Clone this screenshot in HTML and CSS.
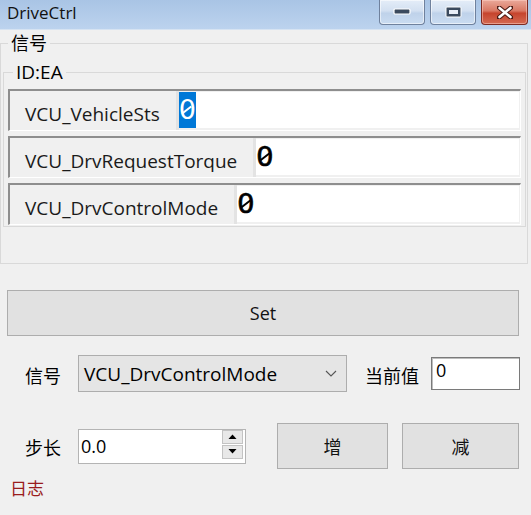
FILE: index.html
```html
<!DOCTYPE html>
<html>
<head>
<meta charset="utf-8">
<link rel="stylesheet" href="styles.css">
</head>
<body>
<div class="window">
  <div class="titlebar">
    <span class="title">DriveCtrl</span>
    <div class="caption-buttons">
      <div class="cap-btn">
        <svg width="18" height="8" viewBox="0 0 18 8"><rect x="1" y="1" width="16" height="5" rx="1" fill="#3b4a5e" stroke="#fff" stroke-width="1.2"/></svg>
      </div>
      <div class="cap-btn">
        <svg width="17" height="12" viewBox="0 0 17 12"><rect x="1" y="1" width="15" height="10" rx="1" fill="#3b4a5e" stroke="#fff" stroke-width="1"/><rect x="4" y="4" width="9" height="4" fill="#e8eef7"/></svg>
      </div>
      <div class="cap-btn close">
        <svg width="16" height="13" viewBox="0 0 16 13"><path d="M2 1.5 L14 11.5 M14 1.5 L2 11.5" stroke="#4a1a14" stroke-width="4.6" stroke-linecap="round"/><path d="M2.5 2 L13.5 11 M13.5 2 L2.5 11" stroke="#fff" stroke-width="2.6" stroke-linecap="round"/></svg>
      </div>
    </div>
  </div>
  <div class="client">
    <fieldset class="group outer">
      <legend class="group-title">信号</legend>
      <fieldset class="group inner">
        <legend class="group-title">ID:EA</legend>
        <div class="sig-row">
          <div class="sig-name">VCU_VehicleSts</div>
          <div class="sig-value"><span class="sel"><span class="zero">0</span></span></div>
        </div>
        <div class="sig-row">
          <div class="sig-name">VCU_DrvRequestTorque</div>
          <div class="sig-value"><span class="zero">0</span></div>
        </div>
        <div class="sig-row">
          <div class="sig-name">VCU_DrvControlMode</div>
          <div class="sig-value"><span class="zero">0</span></div>
        </div>
      </fieldset>
    </fieldset>

    <div class="btn set-btn">Set</div>

    <div class="ctrl-row signal-row">
      <span class="ctrl-label">信号</span>
      <div class="combo">
        <span class="combo-text">VCU_DrvControlMode</span>
        <svg class="chevron" width="12" height="7" viewBox="0 0 12 7"><path d="M1 1 L6 6 L11 1" fill="none" stroke="#555" stroke-width="1.1"/></svg>
      </div>
      <span class="cur-label">当前值</span>
      <div class="cur-value">0</div>
    </div>

    <div class="ctrl-row step-row">
      <span class="ctrl-label">步长</span>
      <div class="spin">
        <span class="spin-text">0.0</span>
        <div class="spin-btns">
          <div class="spin-btn"><svg width="9" height="5" viewBox="0 0 9 5"><path d="M0.5 5 L4.5 0.5 L8.5 5 Z" fill="#000"/></svg></div>
          <div class="spin-btn"><svg width="9" height="5" viewBox="0 0 9 5"><path d="M0.5 0 L4.5 4.5 L8.5 0 Z" fill="#000"/></svg></div>
        </div>
      </div>
      <div class="btn inc-btn">增</div>
      <div class="btn dec-btn">减</div>
    </div>

    <div class="log-label">日志</div>
  </div>
</div>
</body>
</html>
```

FILE: styles.css
```css
* { box-sizing: border-box; }

body {
  margin: 0;
  background: #f0f0f0;
  font-family: "Open Sans", "Noto Sans CJK SC", sans-serif;
  color: #000;
}

.window {
  width: 531px;
  height: 515px;
  overflow: hidden;
  background: #f0f0f0;
}

.titlebar {
  height: 30px;
  background: linear-gradient(#a9c4e5, #bcd3ee);
  border-bottom: 1px solid #d6e3f2;
  display: flex;
  justify-content: space-between;
  align-items: flex-start;
}

.title {
  font-size: 17px;
  line-height: 26px;
  padding-left: 7px;
  color: #111;
}

.caption-buttons {
  display: flex;
  gap: 5px;
  padding-right: 3px;
}

.cap-btn {
  width: 46px;
  height: 25px;
  border: 1px solid #6f819d;
  border-top: none;
  border-radius: 0 0 4px 4px;
  background: linear-gradient(#e4edf8, #d3e0f1 45%, #bfd2ea 55%, #cadcf1);
  display: flex;
  align-items: center;
  justify-content: center;
  box-shadow: inset 0 0 0 1px rgba(255,255,255,0.55);
}

.cap-btn.close {
  width: 47px;
  border-color: #7e2b22;
  background: linear-gradient(#eaa99a, #d97864 45%, #c6442d 55%, #d46a52);
  box-shadow: inset 0 0 0 1px rgba(255,210,200,0.5);
}

.client {
  padding: 0;
}

fieldset.group {
  margin: 0;
  border: 1px solid #d9d9d9;
  min-width: 0;
}

.group-title {
  font-size: 18px;
  line-height: 26px;
  padding: 0 3px;
  margin-left: 5px;
}

.inner .group-title {
  font-size: 19px;
}

.outer {
  margin-left: 2px;
  width: 528px;
  padding: 3px 2px 36px 2px;
}

.inner {
  width: 523px;
  padding: 4px 4px 1px 4px;
}

.sig-row {
  display: flex;
  height: 42px;
  border-top: 2px solid #8e8e8e;
  border-left: 2px solid #8e8e8e;
  border-right: 1px solid #ffffff;
  border-bottom: 1px solid #ffffff;
  margin-bottom: 5px;
}

.sig-row:last-child {
  margin-bottom: 0;
}

.sig-name {
  font-size: 19px;
  line-height: 24px;
  padding: 0 16px 4px 15px;
  display: flex;
  align-items: flex-end;
  border-right: 3px solid #e3e3e3;
  color: #1a1a1a;
}

.sig-value {
  flex: 1;
  background: #fff;
  margin: 1px 1px 2px 0;
  font-family: "DejaVu Sans", sans-serif;
  font-weight: normal;
  -webkit-text-stroke: 0.7px currentColor;
  font-size: 27px;
  line-height: 36px;
  height: 36px;
}

.zero {
  position: relative;
  display: inline-block;
}

.zero::after {
  content: "";
  position: absolute;
  left: 50%;
  top: 51%;
  width: 11px;
  height: 2.4px;
  background: currentColor;
  transform: translate(-50%, -50%) rotate(-38deg);
}

.sel {
  display: inline-block;
  background: #0078d7;
  color: #fff;
  -webkit-text-stroke: 0;
}

.btn {
  background: #e1e1e1;
  border: 1px solid #adadad;
  display: flex;
  align-items: center;
  justify-content: center;
  font-size: 18px;
  color: #111;
}

.set-btn {
  margin: 26px 0 0 7px;
  width: 512px;
  height: 46px;
}

.ctrl-row {
  display: flex;
  align-items: center;
  padding-left: 25px;
}

.signal-row {
  margin-top: 19px;
  height: 37px;
}

.ctrl-label {
  width: 53px;
  font-size: 18px;
  line-height: 26px;
  padding-top: 4px;
}

.combo {
  width: 269px;
  height: 37px;
  background: #e5e5e5;
  border: 1px solid #adadad;
  display: flex;
  align-items: center;
  justify-content: space-between;
  padding: 0 9px 0 5px;
}

.combo-text {
  font-size: 19px;
}

.cur-label {
  margin-left: 18px;
  width: 54px;
  font-size: 18px;
  line-height: 26px;
  padding-top: 4px;
}

.cur-value {
  margin-left: 12px;
  width: 89px;
  height: 33px;
  background: #fff;
  border: 1px solid #7a7a7a;
  box-shadow: inset 1px 1px 0 #bdbdbd;
  font-size: 18px;
  line-height: 24px;
  padding-left: 4px;
}

.step-row {
  margin-top: 31px;
  height: 46px;
}

.spin {
  width: 168px;
  height: 35px;
  background: #fff;
  border: 1px solid #b4b4b4;
  display: flex;
  justify-content: space-between;
  align-items: flex-start;
  padding: 0 2px 0 2px;
}

.spin-text {
  font-size: 18px;
  line-height: 33px;
}

.spin-btns {
  display: flex;
  flex-direction: column;
  gap: 1px;
  margin-top: 0;
}

.spin-btn {
  width: 21px;
  height: 14px;
  background: #e8e8e8;
  border: 1px solid #c3c3c3;
  display: flex;
  align-items: center;
  justify-content: center;
}

.inc-btn {
  margin-left: 31px;
  width: 111px;
  height: 46px;
}

.dec-btn {
  margin-left: 14px;
  width: 117px;
  height: 46px;
}

.log-label {
  margin-top: 7px;
  padding-left: 10px;
  font-size: 17px;
  line-height: 26px;
  color: #9a1c1c;
}
```
